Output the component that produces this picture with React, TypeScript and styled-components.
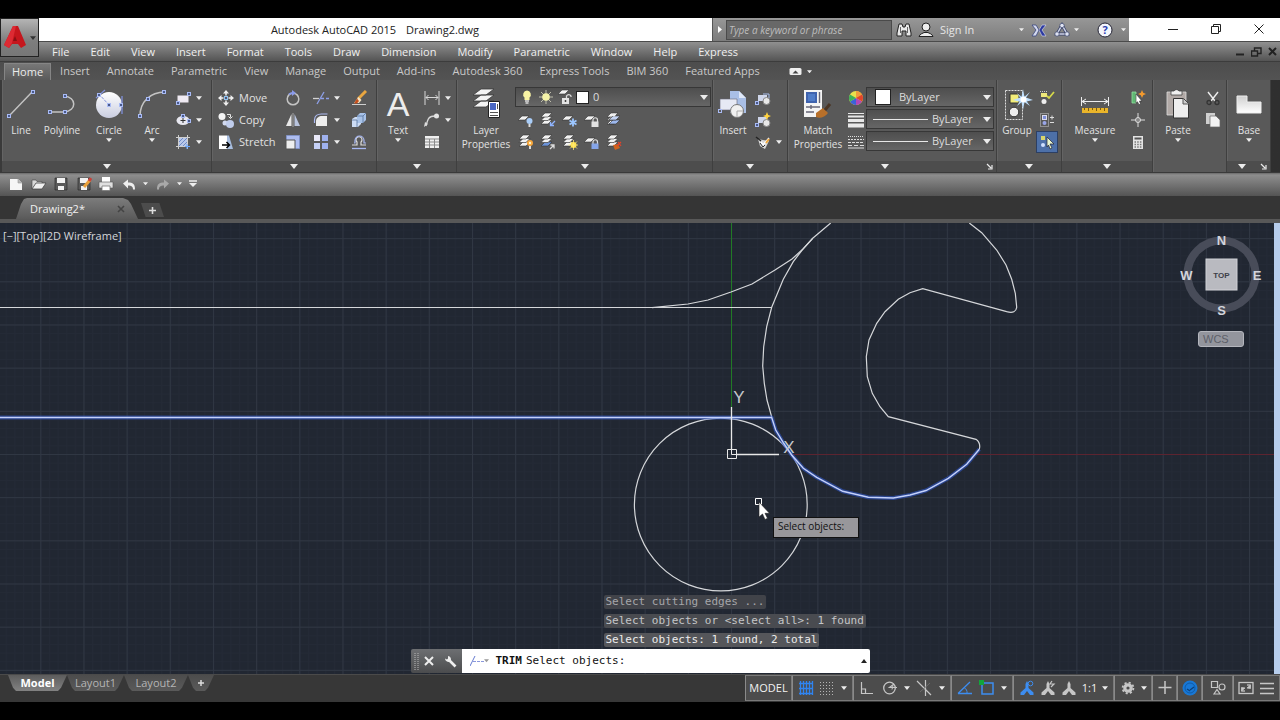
import React from "react";
import styled, { createGlobalStyle, css } from "styled-components";

const GlobalStyle = createGlobalStyle`
  *, *::before, *::after { box-sizing: border-box; }
  body { margin: 0; background: #000; }
  button, input, select { font: inherit; color: inherit; }
`;

const plain = css`
  border: 0;
  padding: 0;
  margin: 0;
  background: none;
  display: flex;
  align-items: center;
  justify-content: center;
  flex: none;
`;

const Page = styled.div`
  height: 100vh;
  min-height: 480px;
  padding: 18px 0;
  background: #000;
  display: flex;
  flex-direction: column;
  overflow: hidden;
  font-family: "Open Sans", "Noto Sans", sans-serif;
  font-size: 11px;
  line-height: 14px;
  color: #dcdcdc;
`;

/* ---------- title bar ---------- */

const Header = styled.header`
  position: relative;
  flex: none;
`;

const AppButton = styled.button`
  ${plain}
  position: absolute;
  left: 0;
  top: 0;
  z-index: 2;
  width: 39px;
  height: 39px;
  gap: 3px;
  border: 1px solid #222;
  background: linear-gradient(#b4b4b4, #7d7d7d 60%, #777);
`;

const TitleBar = styled.div`
  display: flex;
  height: 23px;
  padding-left: 38px;
  background: #fff;
  color: #222;
`;

const Title = styled.h1`
  flex: 1;
  margin: 0;
  display: flex;
  justify-content: center;
  align-items: center;
  gap: 10px;
  font-size: 11px;
  font-weight: 400;
`;

const InfoCenter = styled.div`
  display: flex;
  align-items: center;
  width: 417px;
  background: linear-gradient(#979797, #7c7c7c);
  border-left: 1px solid #555;
  color: #e6e6e6;
`;

const InfoButton = styled.button<{ $w: number }>`
  ${plain}
  width: ${(p) => p.$w}px;
  height: 22px;
`;

const HelpButton = styled(InfoButton)`
  margin-left: 10px;
`;

const SignIn = styled.button`
  ${plain}
  gap: 6px;
  width: 101px;
  justify-content: flex-start;
  padding-left: 2px;
`;

const SearchInput = styled.input`
  width: 166px;
  height: 20px;
  padding: 0 2px;
  border: 1px solid #4a4a4a;
  border-radius: 0;
  background: #686868;
  outline: 0;
  font-style: italic;
  font-size: 10px;
  &::placeholder {
    color: #bdbdbd;
    opacity: 1;
  }
`;

const WindowButtons = styled.div`
  display: flex;
  width: 151px;
  padding-left: 22px;
`;

const WindowButton = styled.button`
  ${plain}
  width: 43px;
  height: 22px;
`;

/* ---------- menus and tabs ---------- */

const MenuBar = styled.nav`
  display: flex;
  align-items: center;
  gap: 1px;
  height: 20px;
  padding-left: 42px;
  border-top: 1px solid #4b4b4b;
  background: linear-gradient(#909090, #545454);
`;

const MenuItem = styled.button`
  ${plain}
  padding: 0 10px;
  color: #f0f0f0;
`;

const MdiButtons = styled.div`
  display: flex;
  margin-left: auto;
`;

const MdiButton = styled.button`
  ${plain}
  width: 16px;
  height: 16px;
`;

const RibbonTabs = styled.div`
  display: flex;
  align-items: flex-end;
  height: 19px;
  padding-left: 4px;
  border-top: 1px solid #3c3c3c;
  background: linear-gradient(#4d4d4d, #535353);
`;

const RibbonTab = styled.button<{ $active?: boolean }>`
  ${plain}
  height: 17px;
  padding: 0 8px 1px;
  margin-right: 1px;
  color: ${(p) => (p.$active ? "#ececec" : "#c9c9c9")};
  ${(p) =>
    p.$active &&
    css`
      padding: 0 7px 1px;
      background: linear-gradient(#777, #5a5a5a);
      border: 1px solid #858585;
      border-bottom: 0;
    `}
`;

const RibbonToggle = styled.button`
  ${plain}
  gap: 5px;
  height: 17px;
  margin-left: 20px;
`;

/* ---------- ribbon ---------- */

const Ribbon = styled.div`
  display: flex;
  height: 93px;
  padding-left: 2px;
  background: linear-gradient(90deg, #3a3a3a, #2f2f2f);
  border-bottom: 1px solid #3a3a3a;
  font-size: 10px;
  flex: none;
`;

const Panel = styled.section<{ $w: number }>`
  display: flex;
  flex-direction: column;
  flex: none;
  width: ${(p) => p.$w}px;
  border-right: 1px solid #3f3f3f;
  background: #595959;
  box-shadow: inset 1px 0 #646464;
`;

const PanelBody = styled.div`
  display: flex;
  flex: 1;
  padding-top: 7px;
`;

const PanelFooter = styled.div`
  display: flex;
  align-items: center;
  height: 11px;
  background: #4d4d4d;
`;

const FooterButton = styled.button`
  ${plain}
  flex: 1;
  height: 11px;
`;

const Launcher = styled.button`
  ${plain}
  width: 14px;
  height: 11px;
`;

const BigButton = styled.button<{ $w: number }>`
  ${plain}
  flex-direction: column;
  justify-content: flex-start;
  align-self: flex-start;
  width: ${(p) => p.$w}px;
  line-height: 14px;
  color: #e2e2e2;
  svg { flex: none; }
`;

const BigLabel = styled.span`
  margin: 2px 0 1px;
  white-space: nowrap;
`;

const Column = styled.div<{ $w?: number; $pad?: number }>`
  display: flex;
  flex-direction: column;
  flex: none;
  width: ${(p) => (p.$w ? `${p.$w}px` : "auto")};
  padding-left: ${(p) => p.$pad || 0}px;
`;

const ToolRow = styled.div`
  display: flex;
  align-items: center;
  height: 22px;
`;

const Tool = styled.button<{ $w?: number; $on?: boolean }>`
  ${plain}
  width: ${(p) => p.$w || 26}px;
  height: 20px;
  ${(p) =>
    p.$on &&
    css`
      background: #4d70a8;
      box-shadow: 0 0 0 1px #2c3f63;
    `}
`;

const CaretTool = styled.button<{ $w?: number }>`
  ${plain}
  width: ${(p) => p.$w || 6}px;
  height: 20px;
`;

const TextTool = styled.button`
  ${plain}
  gap: 5px;
  height: 22px;
  justify-content: flex-start;
  color: #e2e2e2;
  font-size: 11px;
`;

const Combo = styled.label<{ $w: number }>`
  position: relative;
  display: flex;
  align-items: center;
  gap: 4px;
  width: ${(p) => p.$w}px;
  height: 20px;
  margin-bottom: 2px;
  padding-left: 4px;
  border: 1px solid #373737;
  background: linear-gradient(#4e4e4e, #666);
  font-size: 11px;
`;

const Select = styled.select<{ $indent: number }>`
  flex: 1;
  min-width: 0;
  height: 18px;
  padding: 0 12px 0 ${(p) => p.$indent}px;
  border: 0;
  background: none;
  appearance: none;
  outline: 0;
`;

const ComboArrow = styled.span`
  position: absolute;
  right: 2px;
  top: 0;
  height: 18px;
  display: flex;
  align-items: center;
  pointer-events: none;
`;

const Swatch = styled.span<{ $s: number }>`
  flex: none;
  width: ${(p) => p.$s}px;
  height: ${(p) => p.$s}px;
  background: #fff;
  border: 1px solid #222;
`;

const LineSample = styled.span`
  flex: none;
  width: 55px;
  height: 1px;
  margin-left: 2px;
  background: #e8e8e8;
`;

/* ---------- quick access and file tabs ---------- */

const QuickAccess = styled.div`
  display: flex;
  align-items: center;
  height: 23px;
  padding: 0 0 2px 4px;
  background: linear-gradient(#6a6a6a, #8e8e8e 2px, #545454);
`;

const FileTabs = styled.div`
  display: flex;
  align-items: flex-end;
  gap: 3px;
  height: 27px;
  padding-left: 16px;
  border-bottom: 4px solid #585858;
  background: #353535;
`;

const FileTab = styled.div`
  display: flex;
  align-items: center;
  justify-content: space-between;
  width: 122px;
  height: 21px;
  padding: 0 12px 0 14px;
  color: #f0f0f0;
  background: linear-gradient(#7c7c7c, #5a5a5a);
  clip-path: polygon(0 100%, 5px 6px, 8px 1px, 11px 0, 107px 0, 112px 2px, 115px 6px, 100% 100%);
`;

const NewTab = styled.button`
  ${plain}
  width: 23px;
  height: 14px;
  margin-bottom: 2px;
  background: #4c4c4c;
  clip-path: polygon(0 0, 80% 0, 100% 100%, 20% 100%);
`;

/* ---------- drawing area ---------- */

const Canvas = styled.main`
  position: relative;
  flex: 1;
  min-height: 0;
  overflow: hidden;
  border-right: 6px solid #b7cdec;
  background: #212732;
`;

const Drawing = styled.svg`
  position: absolute;
  left: 0;
  top: 0;
  width: 100%;
  height: 100%;
`;

const ViewLabel = styled.div`
  position: absolute;
  left: 3px;
  top: 6px;
  color: #d4d6da;
`;

const ViewCube = styled.div`
  position: absolute;
  right: 10px;
  top: 8px;
  display: flex;
  flex-direction: column;
  align-items: center;
  gap: 14px;
`;

const Wcs = styled.button`
  ${plain}
  width: 46px;
  height: 16px;
  margin-right: 2px;
  justify-content: flex-start;
  padding-left: 4px;
  border: 1px solid #b4b6bd;
  border-radius: 3px;
  background: #93959d;
  color: #5d6069;
  font-family: "Liberation Sans", sans-serif;
`;

const Tooltip = styled.div`
  position: absolute;
  left: 773px;
  top: 294px;
  height: 21px;
  width: 86px;
  padding: 1px 4px;
  border: 1px solid #111;
  background: #98979b;
  color: #111;
  font-size: 10px;
  white-space: nowrap;
`;

const CommandDock = styled.div`
  position: absolute;
  left: 3px;
  right: -3px;
  bottom: 0;
  display: flex;
  justify-content: center;
  font-family: "DejaVu Sans Mono", "Liberation Mono", monospace;
`;

const CommandPanel = styled.div`
  display: flex;
  flex-direction: column;
  width: 459px;
`;

const History = styled.div`
  display: flex;
  flex-direction: column;
  align-items: flex-start;
  gap: 5px;
  padding: 0 0 2px 193px;
`;

const HistoryLine = styled.div<{ $tone: string; $bg: string }>`
  padding: 0 2px;
  height: 14px;
  white-space: nowrap;
  color: ${(p) => p.$tone};
  background: ${(p) => p.$bg};
  border-radius: 2px;
`;

const CommandBar = styled.div`
  display: flex;
  height: 24px;
  margin-bottom: 1px;
`;

const CommandGrip = styled.div`
  display: flex;
  align-items: center;
  width: 51px;
  padding-left: 3px;
  background: linear-gradient(#6d6f72, #4b4c4e);
  border-radius: 2px 0 0 2px;
`;

const GripButton = styled.button`
  ${plain}
  width: 21px;
  height: 22px;
`;

const CommandEntry = styled.label`
  display: flex;
  align-items: center;
  flex: 1;
  padding: 0 3px 0 8px;
  background: #fff;
  color: #111;
  white-space: nowrap;
  border-radius: 0 2px 2px 0;
`;

const CommandName = styled.b`
  margin: 0 4px 0 7px;
`;

const CommandInput = styled.input`
  flex: 1;
  min-width: 0;
  padding: 0 4px;
  border: 0;
  outline: 0;
  background: none;
`;

/* ---------- status bar ---------- */

const StatusBar = styled.footer`
  display: flex;
  flex: none;
  height: 28px;
  border-top: 1px solid #4a4a4a;
  background: #373737;
`;

const LayoutTabs = styled.div`
  display: flex;
  padding-left: 8px;
`;

const LayoutTab = styled.button<{ $w: number; $active?: boolean }>`
  ${plain}
  width: ${(p) => p.$w}px;
  height: 16px;
  color: ${(p) => (p.$active ? "#fff" : "#b4b4b4")};
  font-weight: ${(p) => (p.$active ? 700 : 400)};
  background: ${(p) => (p.$active ? "linear-gradient(#5c5c5c, #828282)" : "linear-gradient(#4c4c4c, #5a5a5a)")};
  clip-path: polygon(0 0, 100% 0, calc(100% - 6px) 80%, calc(100% - 9px) 100%, 8px 100%, 5px 80%);
`;

const StatusCells = styled.div`
  display: flex;
  margin-left: auto;
  height: 27px;
`;

const Cell = styled.div<{ $w: number }>`
  display: flex;
  align-items: center;
  justify-content: space-around;
  width: ${(p) => p.$w}px;
  height: 26px;
  padding: 0 2px;
  border: 1px solid #797979;
  border-left-color: #8a8a8a;
  background: #4c4c4c;
  color: #f2f2f2;
`;

const CellButton = styled.button`
  ${plain}
  height: 24px;
`;

/* ---------- icon pieces ---------- */

type P = { children?: React.ReactNode; w?: number; h?: number; vb?: string };
const I = ({ children, w = 16, h = 16, vb }: P) => (
  <svg width={w} height={h} viewBox={vb || `0 0 ${w} ${h}`} fill="none" aria-hidden="true">
    {children}
  </svg>
);

const Caret = ({ s = 6, c = "#ececec" }: { s?: number; c?: string }) => (
  <svg width={s} height={s / 2 + 1} viewBox="0 0 8 5" aria-hidden="true">
    <path d="M0 0h8L4 5z" fill={c} />
  </svg>
);

const Node = ({ x, y }: { x: number; y: number }) => (
  <rect x={x - 1.5} y={y - 1.5} width="3" height="3" fill="#4a5a8a" stroke="#a9bbf5" strokeWidth="1" />
);

const Sheet = ({ x, y, c = "#f2f2f2" }: { x: number; y: number; c?: string }) => (
  <path d={`M${x + 4} ${y}h7l-4 4h-7z`} fill={c} stroke="#333" strokeWidth=".6" />
);

const Stack = ({ c = "#f2f2f2" }: { c?: string }) => (
  <>
    <Sheet x={1} y={8} c={c} />
    <Sheet x={1} y={4.5} />
    <Sheet x={1} y={1} />
  </>
);

const LineIcon = () => (
  <I w={34} h={34}>
    <path d="M5 29L29 4" stroke="#c4c4c4" strokeWidth="1.4" />
    <Node x={5} y={29} />
    <Node x={29} y={5} />
  </I>
);
const PolylineIcon = () => (
  <I w={34} h={34}>
    <path d="M4 25h15c13-1 13-15 0-16" stroke="#c4c4c4" strokeWidth="1.5" />
    <Node x={5} y={25} />
    <Node x={20} y={25} />
    <Node x={20} y={9} />
  </I>
);
const CircleIcon = () => (
  <I w={34} h={34}>
    <defs>
      <linearGradient id="disc" x1="0" y1="0" x2="0" y2="1">
        <stop offset="0" stopColor="#fff" />
        <stop offset="1" stopColor="#c9cde0" />
      </linearGradient>
    </defs>
    <circle cx="17" cy="18" r="13" fill="url(#disc)" />
    <path d="M17 18L6 6" stroke="#8795d8" strokeDasharray="3 1" />
    <path d="M4 11l9-8M30 9v18" stroke="#7f8fd9" strokeWidth="1.3" />
    <Node x={17} y={18} />
    <Node x={7} y={8} />
    <Node x={29} y={18} />
  </I>
);
const ArcIcon = () => (
  <I w={34} h={34}>
    <path d="M5 29C5 15 15 5 30 5" stroke="#c4c4c4" strokeWidth="1.6" />
    <Node x={5} y={29} />
    <Node x={13} y={12} />
    <Node x={29} y={5} />
  </I>
);
const RectIcon = () => (
  <I>
    <rect x="2.5" y="5.5" width="11" height="7" fill="#efeaf2" />
    <Node x={3} y={13} />
    <Node x={14} y={4} />
  </I>
);
const EllipseIcon = () => (
  <I>
    <ellipse cx="8" cy="8.5" rx="6.500" ry="4.500" fill="#e8e8f0" />
    <path d="M8 6v5M5.500 8.500h5" stroke="#333" />
    <Node x={8} y={4} />
    <Node x={14} y={9} />
  </I>
);
const HatchIcon = () => (
  <I>
    <rect x="3.500" y="3.500" width="9" height="9" fill="#b9c9ea" />
    <path d="M3.500 1v14M12.500 1v14M1 3.500h14M1 12.500h14" stroke="#cfcfcf" />
    <path d="M4 8l4-4M4 12l8-8M8 12l4-4" stroke="#6f8ac8" />
    <path d="M12 10v5M10 12.500h5" stroke="#69a6ff" />
  </I>
);
const MoveIcon = () => (
  <I>
    <path d="M8 0l3 3.500H5zM8 16l3-3.500H5zM0 8l3.500-3v6zM16 8l-3.500-3v6z" fill="#f0f0f0" />
    <path d="M8 3v2.500M8 10.500V13M3 8h2.500M10.500 8H13" stroke="#f0f0f0" strokeWidth="1.500" />
    <rect x="6.500" y="6.500" width="3" height="3" fill="#557" stroke="#8fc4f0" />
  </I>
);
const CopyIcon = () => (
  <I>
    <circle cx="4" cy="4.500" r="3.500" fill="#f4f4f4" />
    <circle cx="7" cy="11" r="2.500" fill="#d2daf0" />
    <circle cx="12" cy="12" r="4" fill="#c0cdec" />
    <path d="M9 2.500h3.500v3M10.500 4.500l2 2 2-2" stroke="#e8e8e8" />
  </I>
);
const StretchIcon = () => (
  <I>
    <path d="M1 1.500h8V15H1z" fill="#fff" />
    <path d="M9 1.500h2L15 15H9z" fill="#a8bee0" />
    <path d="M4 11h7M8.500 8l3 3-3 3" stroke="#000" strokeWidth="1.500" />
  </I>
);
const RotateIcon = () => (
  <I>
    <circle cx="8" cy="9" r="5.800" stroke="#c4c4c4" strokeWidth="1.500" />
    <path d="M4 4.500A6 6 0 0 1 9 3" stroke="#8b9bea" strokeWidth="2" />
    <path d="M7 0l4 3-4 3z" fill="#8b9bea" />
  </I>
);
const TrimIcon = () => (
  <I>
    <path d="M0 8.500h6" stroke="#d2d2d2" strokeWidth="1.300" />
    <path d="M8 8.500h8" stroke="#8ea0e8" strokeWidth="1.300" strokeDasharray="3 2" />
    <path d="M4 14L11 2" stroke="#8ea0e8" strokeWidth="1.300" />
  </I>
);
const EraseIcon = () => (
  <I>
    <path d="M15 1l-8 8" stroke="#e9a640" strokeWidth="3" />
    <path d="M7.500 7l3 3-2.500 3H3z" fill="#f3e3c3" />
    <path d="M6 8.500l2 2.500-2 2.500H3z" fill="#c34e1c" />
    <path d="M1 14.500h14" stroke="#cfcfcf" />
  </I>
);
const MirrorIcon = () => (
  <I>
    <path d="M6.500 2v12H1z" fill="#e8e8e8" />
    <path d="M9.500 2v12H15z" fill="#b9c4dd" />
    <path d="M8 1v14" stroke="#bbb" strokeWidth=".8" />
  </I>
);
const FilletIcon = () => (
  <I>
    <path d="M3 14V9c0-3 3-5 6-5h5v10z" fill="#ededed" />
    <path d="M1.500 11V8c0-4 3-6 7-6h6" stroke="#aebcf4" strokeWidth="1.200" />
  </I>
);
const BoxIcon = () => (
  <I>
    <path d="M1 7l3-2h6v7l-3 3H1z" fill="#cddcf4" />
    <path d="M6 4l3-3h6v7l-3 3H6z" fill="#a9c3e8" />
    <path d="M6 4h6v7M12 4l3-3M1 8h5v7" stroke="#55719c" strokeWidth=".8" />
  </I>
);
const ScaleIcon = () => (
  <I>
    <path d="M1.500 1.500h13v13h-13z" fill="#aebdf0" stroke="#8293c6" />
    <path d="M1 6h9v9H1z" fill="#eee" stroke="#555" />
  </I>
);
const ArrayIcon = () => (
  <I>
    <path d="M1 1h6v6H1z" fill="#e8e8f8" />
    <path d="M9 1h6v6H9zM9 9h6v6H9z" fill="#9fb1ee" />
    <path d="M1 9h6v6H1z" fill="#c5d0f6" />
  </I>
);
const OffsetIcon = () => (
  <I>
    <path d="M1 11h5V8a3 3 0 1 1 4 0v3h5" stroke="#dcdcdc" strokeWidth="1.200" />
    <path d="M3 9h1V6.500a4.500 4.500 0 0 1 9 0V9h2" stroke="#a8b8f4" strokeWidth="1.200" />
    <path d="M1 14.500h14" stroke="#a8b8f4" strokeWidth="1.300" />
  </I>
);
const LetterWrap = styled.span`
  display: flex;
  align-items: center;
  height: 34px;
  font-family: "Liberation Sans", sans-serif;
  font-size: 34px;
  line-height: 34px;
  color: #ececec;
`;
const DimIcon = () => (
  <I>
    <path d="M1 1v14M15 1v14" stroke="#d8d8d8" />
    <path d="M2 7.500h12M4.500 5L2 7.500 4.500 10M11.500 5L14 7.500l-2.500 2.500" stroke="#d8d8d8" />
  </I>
);
const LeaderIcon = () => (
  <I>
    <path d="M2 14C4 6 5 4 11 4" stroke="#d8d8d8" strokeWidth="1.300" />
    <path d="M0 15l1-5 3 2z" fill="#ddd" />
    <circle cx="12.500" cy="4" r="2.500" fill="#e4e4e4" />
  </I>
);
const TableIcon = () => (
  <I>
    <path d="M1 2h14v12H1z" fill="#f0f0f0" />
    <path d="M1 5h14M1 8h14M1 11h14M5.500 5v9M10.500 5v9" stroke="#8b8b8b" />
  </I>
);
const LayerPropsIcon = () => (
  <I w={34} h={34}>
    <path d="M12 14h13l-8 6H4zM12 8h13l-8 6H4zM12 2h13l-8 6H4z" fill="#f4f4f4" stroke="#3a3a3a" strokeWidth=".8" />
    <path d="M19.500 14.500h11v16h-11z" fill="#fff" stroke="#222" />
    <path d="M21 16h6v7h-6z" fill="#4a67c4" />
    <path d="M28.500 17v5M21 25.500h8M21 28.500h8" stroke="#555" />
  </I>
);
const BulbIcon = () => (
  <I w={14}>
    <path d="M7 1.500a4 4 0 0 1 2.500 7V11h-5V8.500A4 4 0 0 1 7 1.500z" fill="#f8f3a4" />
    <path d="M5 12h4M5.500 14h3" stroke="#ddd" strokeWidth="1.300" />
  </I>
);
const SunIcon = () => (
  <I>
    <path d="M8 1v14M1 8h14M3 3l10 10M13 3L3 13" stroke="#c9c9b5" strokeWidth=".9" />
    <circle cx="8" cy="8" r="3.800" fill="#f4f2a8" />
  </I>
);
const UnlockIcon = () => (
  <I w={14}>
    <Sheet x={0} y={1} />
    <path d="M8.500 9V7a2.500 2.500 0 0 1 4.500 0v1" stroke="#ddd" strokeWidth="1.300" />
    <rect x="4" y="9" width="7" height="6" fill="#e4e4e4" />
    <path d="M7.500 11v2" stroke="#444" strokeWidth="1.500" />
  </I>
);
const LayerTool = ({ kind }: { kind: number }) => (
  <I>
    {[0, 2, 3, 8].includes(kind) ? <Sheet x={0} y={4} /> : <Stack c={kind === 6 ? "#6b93d8" : "#f2f2f2"} />}
    {kind === 0 && (
      <>
        <circle cx="11.500" cy="9" r="3" fill="#a9cdf8" />
        <path d="M11.500 12v3" stroke="#ddd" strokeWidth="2" />
      </>
    )}
    {kind === 1 && <path d="M15 9l-4 4M10.500 10v3.500H14" stroke="#8fb4ff" strokeWidth="1.300" />}
    {kind === 2 && <path d="M11 6.500v8M7.500 8.500l7 4M14.500 8.500l-7 4" stroke="#9cc6ff" strokeWidth="1.800" />}
    {(kind === 3 || kind === 8) && (
      <>
        <path d="M9 10V8a2 2 0 0 1 4.500 0v2" stroke="#ddd" strokeWidth="1.200" />
        <rect x="7.500" y="9.500" width="7" height="5.500" fill={kind === 3 ? "#e2e2e2" : "#86a5e8"} />
      </>
    )}
    {kind === 4 && (
      <>
        <Sheet x={3} y={8} c="#9db8ee" />
        <Sheet x={3} y={4} c="#c3d3f4" />
        <circle cx="8" cy="3" r="1.500" fill="#eee" />
      </>
    )}
    {kind === 5 && (
      <>
        <circle cx="12" cy="9" r="3" fill="#f7a53a" />
        <circle cx="12" cy="9" r="1.200" fill="#fff3c2" />
        <path d="M12 12v3" stroke="#ddd" strokeWidth="2" />
      </>
    )}
    {kind === 6 && <path d="M10 15l4-4M10.500 11H14v3.500" stroke="#ddd" strokeWidth="1.300" />}
    {kind === 7 && (
      <>
        <circle cx="11.500" cy="11" r="3" fill="#ffe03a" />
        <path d="M11.500 6v10M6.500 11h10M8 7.500l7 7M15 7.500l-7 7" stroke="#ffe878" strokeWidth=".8" />
      </>
    )}
    {kind === 9 && (
      <>
        <path d="M7 11l5-1 2 4-5 2z" fill="#d0631d" />
        <path d="M11 12l4-4M12 8l3 4" stroke="#e3432a" strokeWidth="1.200" />
      </>
    )}
  </I>
);
const InsertIcon = () => (
  <I w={34} h={34}>
    <path d="M14 4h9l7 7v15H14z" fill="#a9bfe6" />
    <path d="M23 4v7h7z" fill="#dfe8f8" />
    <path d="M4 12h17v11H4z" fill="#e6e9f4" stroke="#667" strokeWidth=".6" />
    <circle cx="21" cy="24" r="6.500" fill="#f0f0f0" stroke="#777" />
    <path d="M21 24h6M21 24v6" stroke="#aaa" />
    <rect x="2.500" y="22.500" width="3" height="3" stroke="#a9bbf5" />
  </I>
);
const BlockIcon = ({ kind }: { kind: number }) =>
  kind === 2 ? (
    <I>
      <path d="M3 5l5 1 6 1-4 8-5-3z" fill="#d9d9d9" />
      <path d="M1 3l5 4" stroke="#222" strokeWidth="1.500" />
      <path d="M6 8l2 3 6-7" stroke="#fff" strokeWidth="1.500" />
      <path d="M11 9l3-4" stroke="#f0a83c" strokeWidth="2" />
      <path d="M5 9l3 4 2-2" stroke="#333" />
    </I>
  ) : (
    <I>
      <path d="M3 5h9v6H3z" fill="#cfd6ea" />
      <circle cx="11.500" cy="11" r="3.500" fill="#e8e8e8" stroke="#888" />
      <Node x={2} y={13} />
      {kind === 1 ? (
        <path d="M12 0l1.200 3L16 4l-2.800 1.200L12 8l-1.200-2.800L8 4l2.800-1z" fill="#ffd23e" />
      ) : (
        <path d="M8 4h6v4" stroke="#a9bfee" />
      )}
    </I>
  );
const MatchIcon = () => (
  <I w={34} h={34}>
    <path d="M3 3h18v27H3z" fill="#f4f4f4" />
    <path d="M5 5h11v11H5z" fill="#3f63ae" />
    <path d="M7 7h7v7H7z" fill="#4f7cc8" />
    <path d="M18.500 5v11M5 20h14M5 25h8M10 18v4" stroke="#667" strokeWidth="1.400" />
    <path d="M15 26l7-5 5 5c-3 4-8 6-12 4z" fill="#b8702a" />
    <path d="M24 23l5-6" stroke="#4a3524" strokeWidth="3" />
  </I>
);
const WheelIcon = () => (
  <I>
    <circle cx="8" cy="8" r="7" fill="#e8e04c" />
    <path d="M8 8V1a7 7 0 0 1 6 3.500z" fill="#f09a3c" />
    <path d="M8 8l6-3.500a7 7 0 0 1 0 7z" fill="#e2442c" />
    <path d="M8 8l6 3.500A7 7 0 0 1 8 15z" fill="#b048b8" />
    <path d="M8 8v7a7 7 0 0 1-6-3.500z" fill="#3c62d8" />
    <path d="M8 8l-6 3.500a7 7 0 0 1 0-7z" fill="#3cb05c" />
  </I>
);
const WeightIcon = () => (
  <I>
    <path d="M0 1.500h16" stroke="#e8e8e8" />
    <path d="M0 4.500h16" stroke="#e8e8e8" strokeWidth="2" />
    <path d="M0 8.500h16" stroke="#e8e8e8" strokeWidth="3" />
    <path d="M0 13.500h16" stroke="#e8e8e8" strokeWidth="4" />
  </I>
);
const LinetypeIcon = () => (
  <I>
    <path d="M0 2.500h16" stroke="#ddd" strokeDasharray="1 1" />
    <path d="M0 5.500h16" stroke="#ddd" strokeDasharray="2 1" />
    <path d="M0 8.500h16" stroke="#ddd" strokeDasharray="3 1" />
    <path d="M0 11.500h16" stroke="#ddd" strokeDasharray="4 2" />
    <path d="M0 14h16" stroke="#ddd" />
  </I>
);
const GroupIcon = () => (
  <I w={34} h={34}>
    <path d="M5.500 3.500h17v29h-17z" stroke="#ddd" strokeDasharray="2 1" />
    <path d="M10 7h9v9h-9z" fill="#f3ee7a" stroke="#333" />
    <circle cx="14" cy="25" r="4.800" fill="#eee" stroke="#333" />
    <path d="M23 2l1.500 8L33 13l-8.500 2L23 23l-1.500-8-8.500-2 8.500-3zM17 6l6 5 7-6-5 7 5 7-7-5-6 5 4-7z" fill="#bfe0ff" />
    <circle cx="23.500" cy="12.500" r="3" fill="#fff" />
  </I>
);
const GroupTool = ({ kind }: { kind: number }) => (
  <I>
    {kind === 0 && (
      <>
        <rect x="2" y="3" width="6" height="4" fill="#eee77a" />
        <path d="M1 1.500h8" stroke="#ccc" strokeDasharray="1 1" />
        <circle cx="5" cy="11.500" r="2.500" fill="#eee" />
        <path d="M8 6l2 2 5-6" stroke="#d5d84a" strokeWidth="1.800" />
      </>
    )}
    {kind === 1 && (
      <>
        <path d="M1.500 1.500h8v13h-8z" stroke="#ccc" strokeDasharray="1 1" />
        <rect x="3.500" y="3.500" width="4" height="4" fill="#7f8fd9" stroke="#dde" />
        <circle cx="5.500" cy="11" r="2" fill="#99a6e8" />
        <path d="M11 5.500h4M13 3.500v4M11 10.500h4" stroke="#ddd" />
      </>
    )}
    {kind === 2 && (
      <>
        <rect x="2" y="2" width="4" height="4" fill="#d8d56c" />
        <rect x="2" y="9" width="4" height="4" rx="2" fill="#cfe0ff" />
        <path d="M8 3l7 7h-4l2 4-2 1-1.500-4L8 13z" fill="#e9f6cf" stroke="#223" strokeWidth=".7" />
      </>
    )}
  </I>
);
const MeasureIcon = () => (
  <I w={34} h={34}>
    <path d="M3.500 10v9M30.500 10v9" stroke="#eee" />
    <path d="M4 14.500h26M8 12l-4 2.500L8 17M26 12l4 2.500-4 2.500" stroke="#eee" />
    <path d="M4 21h26v5H4z" fill="#eab52a" />
    <path d="M6.500 21v2M10.500 21v3M14.500 21v2M18.500 21v3M22.500 21v2M26.500 21v3" stroke="#7a5a10" />
  </I>
);
const QuickSelectIcon = () => (
  <I>
    <path d="M2 2h4v11H2z" fill="#5fb873" stroke="#8fe0a0" strokeWidth=".8" />
    <path d="M6 4l6 7H9.500l1 3-1.500.8-1.500-3L6 13z" fill="#fff" stroke="#333" strokeWidth=".6" />
    <path d="M12 0l1.200 2.800L16 4l-2.800 1.200L12 8l-1.200-2.800L8 4l2.800-1.200z" fill="#f39a2e" />
  </I>
);
const PointIcon = () => (
  <I>
    <path d="M8 1v14M1 8h14" stroke="#ddd" />
    <circle cx="8" cy="8" r="2.500" fill="#888" stroke="#ddd" />
  </I>
);
const CalcIcon = () => (
  <I>
    <rect x="3" y="2" width="10" height="13" fill="#e4e4e4" />
    <path d="M4.500 4.500h7" stroke="#555" strokeWidth="2" />
    <path d="M4.500 8h7M4.500 10.500h7M4.500 13h7" stroke="#777" strokeDasharray="1.500 1.200" strokeWidth="1.300" />
  </I>
);
const PasteIcon = () => (
  <I w={34} h={34}>
    <path d="M6 5h19v23H6z" fill="#b1a9a6" stroke="#ddd" strokeWidth=".8" />
    <path d="M10 8V4h3a3 3 0 0 1 5 0h3v4z" fill="#f0f0f0" stroke="#444" strokeWidth=".8" />
    <path d="M12.500 11.500h10l5 5v14.500h-15z" fill="#eee" stroke="#333" />
    <path d="M22 11.500v5.500h5.500" fill="#ccc" stroke="#555" />
  </I>
);
const CutIcon = () => (
  <I>
    <path d="M3 2l7 9M13 2L6 11" stroke="#eee" strokeWidth="1.400" />
    <circle cx="4" cy="12.500" r="2" stroke="#333" strokeWidth="1.300" />
    <circle cx="12" cy="12.500" r="2" stroke="#333" strokeWidth="1.300" />
  </I>
);
const CopyClipIcon = () => (
  <I>
    <path d="M1 1h9v11H1z" fill="#cfcfcf" />
    <path d="M5 4h6l4 4v7H5z" fill="#f2f2f2" stroke="#666" strokeWidth=".7" />
  </I>
);
const BaseIcon = () => (
  <I w={34} h={34}>
    <defs>
      <linearGradient id="base" x1="0" y1="0" x2="0" y2="1">
        <stop offset="0" stopColor="#cfcfcf" />
        <stop offset="1" stopColor="#fff" />
      </linearGradient>
    </defs>
    <path d="M5 9h10v6h14v11H5z" fill="url(#base)" stroke="#eee" />
  </I>
);
const LauncherIcon = () => (
  <I w={7} h={7}>
    <path d="M1 1l4 4M6 2v4H2" stroke="#ececec" strokeWidth="1.200" />
  </I>
);

/* quick access */
const NewIcon = () => (
  <I>
    <path d="M2 3h8l4 4v7H2z" fill="#f6f6f6" />
    <path d="M10 3v4h4" fill="#bbb" stroke="#999" strokeWidth=".6" />
  </I>
);
const OpenIcon = () => (
  <I>
    <path d="M1 13V4h4l1 1.500h5V8" fill="#d8d8d8" stroke="#444" strokeWidth=".6" />
    <path d="M1 13l4-6h10l-4 6z" fill="#f0f0f0" stroke="#444" strokeWidth=".8" />
  </I>
);
const SaveIcon = ({ pen }: { pen?: boolean }) => (
  <I>
    <path d="M2 2h12v12H2z" fill="#5a5a5a" stroke="#222" strokeWidth=".6" />
    <path d="M4 2h8v5H4zM5 10h6v4H5z" fill="#f2f2f2" />
    {pen && <path d="M14 4l-6 7" stroke="#eba13a" strokeWidth="3" />}
    {pen && <path d="M15 2l-2 3" stroke="#c8413a" strokeWidth="3" />}
  </I>
);
const PrintIcon = () => (
  <I>
    <path d="M4 1h8v5H4z" fill="#fff" />
    <path d="M1 6h14v6H1z" fill="#e0e0e0" stroke="#555" strokeWidth=".6" />
    <path d="M4 10h8v4.500H4z" fill="#fff" stroke="#777" strokeWidth=".8" />
  </I>
);
const UndoIcon = ({ flip }: { flip?: boolean }) => (
  <I>
    <path
      transform={flip ? "translate(16 0) scale(-1 1)" : undefined}
      d="M2 7.500L7 3.500v3c5 0 7 1.500 7 7H12c0-3-1.500-4-5-4v3z"
      fill={flip ? "#a9a9a9" : "#eee"}
    />
  </I>
);

/* status bar */
const blue = "#3d8df0";
const light = "#c6c6c6";
const GridIcon = ({ on }: { on?: boolean }) => (
  <I>
    {on ? (
      <path d="M2.500 1v14M5.500 1v14M8.500 1v14M11.500 1v14M14.500 1v14M1 3.500h14M1 8.500h14M1 13.500h14" stroke="#2f84f0" strokeWidth="1.300" />
    ) : (
      <path d="M1 2.500h14M1 5.500h14M1 8.500h14M1 11.500h14M1 14.500h14" stroke="#b5b5b5" strokeDasharray="1 2" />
    )}
  </I>
);
const OrthoIcon = () => (
  <I>
    <path d="M2.500 2v11.500H14M2.500 9h4v4.500" stroke={light} strokeWidth="1.200" />
  </I>
);
const PolarIcon = () => (
  <I>
    <circle cx="7.500" cy="8" r="5.800" stroke={light} strokeWidth="1.300" />
    <path d="M15 7.500H7.500L12 4" stroke={light} strokeWidth="1.200" />
    <path d="M10 9.500l1-4" stroke={light} />
  </I>
);
const IsoIcon = () => (
  <I>
    <path d="M1 1l14 14M9.500 0v16" stroke={light} strokeWidth="1.200" />
    <path d="M14 3L4 12" stroke="#6c6c6c" />
  </I>
);
const TrackIcon = () => (
  <I>
    <path d="M1 13.500h14M1 13.500L13 2" stroke={blue} strokeWidth="1.300" />
    <path d="M7 7.500a6 6 0 0 1 3 6" stroke={blue} />
  </I>
);
const SnapIcon = () => (
  <I>
    <path d="M3 3h11v11H3z" stroke={blue} strokeWidth="1.500" />
    <rect x="0" y="0" width="5" height="5" fill="#12a53a" />
  </I>
);
const ScaleMan = ({ c, kind }: { c: string; kind: number }) => (
  <I>
    <path d="M6.500 4L8 1l1.500 3v4l5 4.500V15H11l-3-4-3 4H1.500v-2.500L6.500 8z" fill={c} />
    {kind === 0 && <circle cx="11.500" cy="3.500" r="2.300" fill="#4c4c4c" stroke={c} />}
    {kind === 1 && <path d="M12 1l-2 3h4l-3 3" stroke={c} strokeWidth="1.200" />}
  </I>
);
const GearIcon = () => (
  <I>
    <circle cx="8" cy="8" r="3.200" stroke={light} strokeWidth="3.200" />
    <circle cx="8" cy="8" r="5.400" stroke={light} strokeWidth="1.800" strokeDasharray="2.120 2.120" />
  </I>
);
const PlusIcon = () => (
  <I>
    <path d="M8 1v13M1.500 7.500h13" stroke={light} strokeWidth="1.500" />
  </I>
);
const PerfIcon = () => (
  <I>
    <circle cx="8" cy="8" r="7.500" fill="#1878d6" />
    <circle cx="8" cy="8" r="5" stroke="#0f5aa8" />
    <path d="M8 10l4-3M5 9l3 2" stroke="#0b3f7a" strokeWidth="1.200" />
  </I>
);
const IsolateIcon = () => (
  <I>
    <path d="M1.500 1.500h6v6h-6z" stroke={light} strokeWidth="1.200" />
    <circle cx="12" cy="7" r="3" stroke={light} strokeWidth="1.200" />
    <path d="M7 9.500l3 4.500H4z" stroke={light} strokeWidth="1.200" />
  </I>
);
const CleanIcon = () => (
  <I>
    <rect x="1" y="2.500" width="14" height="11" stroke={light} strokeWidth="1.300" />
    <path d="M9 8l3.500-3v3.500zM12.500 5H9zM7 8l-3.500 3V7.500zM3.500 11H7z" fill={light} stroke={light} strokeWidth=".8" />
  </I>
);
const BurgerIcon = () => (
  <I>
    <path d="M1 3.500h14M1 8.500h14M1 13.500h14" stroke={light} strokeWidth="1.600" />
  </I>
);

/* ---------- composite controls ---------- */

const Big = ({ w, icon, label, caret }: { w: number; icon: React.ReactNode; label: string[]; caret?: boolean }) => (
  <BigButton $w={w}>
    {icon}
    <BigLabel>
      {label.map((line, i) => (
        <React.Fragment key={line}>
          {i > 0 && <br />}
          {line}
        </React.Fragment>
      ))}
    </BigLabel>
    {caret && <Caret s={6} />}
  </BigButton>
);

const SplitRow = ({ icon, name, w, cw }: { icon: React.ReactNode; name: string; w?: number; cw?: number }) => (
  <ToolRow>
    <Tool aria-label={name} $w={w}>{icon}</Tool>
    <CaretTool aria-label={`${name} options`} $w={cw}>
      <Caret s={6} />
    </CaretTool>
  </ToolRow>
);

const Row = ({ icon, name, w, on }: { icon: React.ReactNode; name: string; w?: number; on?: boolean }) => (
  <ToolRow>
    <Tool aria-label={name} $w={w} $on={on}>{icon}</Tool>
  </ToolRow>
);

const Footer = ({ name, launcher }: { name: string; launcher?: boolean }) => (
  <PanelFooter>
    <FooterButton aria-label={`${name} panel`}>
      <Caret s={8} />
    </FooterButton>
    {launcher && (
      <Launcher aria-label={`${name} settings`}>
        <LauncherIcon />
      </Launcher>
    )}
  </PanelFooter>
);

const ComboBox = ({ w, name, value, indent, children }: { w: number; name: string; value: string; indent: number; children: React.ReactNode }) => (
  <Combo $w={w}>
    {children}
    <Select aria-label={name} $indent={indent}>
      <option>{value}</option>
    </Select>
    <ComboArrow>
      <Caret s={8} />
    </ComboArrow>
  </Combo>
);

const menus = ["File", "Edit", "View", "Insert", "Format", "Tools", "Draw", "Dimension", "Modify", "Parametric", "Window", "Help", "Express"];
const tabs = ["Home", "Insert", "Annotate", "Parametric", "View", "Manage", "Output", "Add-ins", "Autodesk 360", "Express Tools", "BIM 360", "Featured Apps"];
const layerTools = ["Off", "Isolate", "Freeze", "Lock", "Make Current", "On", "Unisolate", "Thaw", "Unlock", "Match"];

const jaw =
  "M830.7 223L812.7 238.3 802.7 249.3 793.3 261.7 783.3 279.3 771.7 307.3 766.7 326.7 763.7 346.7 762.7 366 764.3 383.3 767 400 771.7 417" +
  "M979.3 449.3Q981 443 976 439.3L888.3 416.7 880 406.7 872.3 393.3 867.3 376.7 866.3 356.7 869 340 876.7 323.3 885 311.7 898.3 299.3 910 292.7 922.7 288.7 1006.7 311.7Q1016 314 1016.7 307.3L1015.3 293.3 1011.7 279.3 1006 265 996.7 250 981.7 232.7 969.3 223";
const picked =
  "M0 417.5H771.7L775.7 430 783.3 442.7 791.7 455 803.3 468.3 816.7 477.3 842.7 491.3 868.3 497.3 893.3 498 910 495 926 490.5 948.3 478.3 966.7 464.3 979.3 449.3";

const ModelSpace = () => (
  <Drawing aria-label="Wrench drawing">
    <defs>
      <pattern id="minor" patternUnits="userSpaceOnUse" x="731" y="454" width="8.634" height="8.634">
        <path d="M.5 0v9M0 .5h9" stroke="#242a36" fill="none" />
      </pattern>
      <pattern id="major" patternUnits="userSpaceOnUse" x="731" y="454" width="43.17" height="43.17">
        <path d="M.5 0v44M0 .5h44" stroke="#303743" fill="none" />
      </pattern>
    </defs>
    <g transform="translate(0 -223)" fill="none">
      <rect y="223" width="100%" height="100%" fill="url(#minor)" />
      <rect y="223" width="100%" height="100%" fill="url(#major)" />
      <path d="M731.500 223V407" stroke="#217a25" />
      <path d="M790 454.500H1274" stroke="#5c2430" />
      <g stroke="#d5d7da" strokeWidth="1.200">
        <path d="M0 307.500H771.700" />
        <path d="M652 307.700L688 304 708 300 731 292 752 284 775 270 792 259 803 249 812.700 238.300" />
        <path d={jaw} />
        <circle cx="720.800" cy="504.500" r="86.400" />
      </g>
      <path d={picked} stroke="#2f57c8" strokeWidth="4" opacity=".6" strokeLinejoin="round" />
      <path d={picked} stroke="#c3d0fa" strokeWidth="1.400" />
      <g stroke="#e8e8e8">
        <path d="M731.500 407V450M736 454.500H779" strokeWidth="1.300" />
        <path d="M727.500 449.500h9v9h-9zM731.500 450v4.500H736" />
      </g>
      <g fill="#c4c7cc" fontFamily="Liberation Sans" fontSize="17" textAnchor="middle">
        <text x="739" y="403">Y</text>
        <text x="789" y="453">X</text>
      </g>
      <path d="M755.500 498.500h6v6h-6z" stroke="#fff" />
      <path d="M759 502v15l3.500-3 2.500 5.500 2.500-1.200-2.500-5h4.500z" fill="#fff" stroke="#222" strokeWidth=".6" />
    </g>
  </Drawing>
);

export default function App() {
  return (
    <Page>
      <GlobalStyle />
      <Header>
        <AppButton aria-label="Application menu">
          <svg width="24" height="26" viewBox="0 0 24 26" aria-hidden="true">
            <path d="M10 1h5l8 19-5 3-3-4H9l-3 4-5-3z" fill="#c5161d" />
            <path d="M10 1h3L9 18l-3 5-5-3z" fill="#dd2a33" />
            <path d="M12 11l2 5h-4z" fill="#8a1015" />
          </svg>
          <Caret s={6} c="#333" />
        </AppButton>
        <TitleBar>
          <Title>
            <span>Autodesk AutoCAD 2015</span>
            <span>Drawing2.dwg</span>
          </Title>
          <InfoCenter>
            <InfoButton $w={13} aria-label="Collapse search">
              <I w={4} h={7}><path d="M0 0l4 3.500L0 7z" fill="#fff" /></I>
            </InfoButton>
            <SearchInput placeholder="Type a keyword or phrase" aria-label="Search" />
            <InfoButton $w={24} aria-label="Find">
              <I>
                <path d="M3 2h3l1 3h2l1-3h3l2 9v3h-5V9H6v5H1v-3z" fill="#e8e8e8" stroke="#222" />
                <path d="M4.500 5v6M11.500 5v6" stroke="#666" />
              </I>
            </InfoButton>
            <SignIn>
              <I>
                <circle cx="8" cy="5" r="4" fill="#eee" stroke="#222" />
                <path d="M1 14.500c1-3 4-3 5-4h4c1 1 4 1 5 4z" fill="#eee" stroke="#222" />
              </I>
              Sign In
            </SignIn>
            <InfoButton $w={8} aria-label="Account options"><Caret s={5} /></InfoButton>
            <InfoButton $w={28} aria-label="Exchange apps">
              <I>
                <path d="M8 8l3-5h4l-4 5 4 6h-4z" fill="#2d3aa0" stroke="#dfe3f5" strokeWidth=".6" />
                <path d="M1 3h4l3 5-3 6H1l4-6z" fill="#d5daee" stroke="#3a4680" strokeWidth=".8" />
              </I>
            </InfoButton>
            <InfoButton $w={18} aria-label="Stay connected">
              <I>
                <path d="M8 3L3 12h10z" stroke="#39436c" strokeWidth="3" />
                <path d="M8 3L3 12h10z" stroke="#cfd4e6" strokeWidth="1.500" />
                <circle cx="8" cy="3.500" r="2.200" fill="#dfe3f2" stroke="#39436c" strokeWidth=".7" />
                <circle cx="3" cy="12" r="2.200" fill="#dfe3f2" stroke="#39436c" strokeWidth=".7" />
                <circle cx="13" cy="12" r="2.200" fill="#dfe3f2" stroke="#39436c" strokeWidth=".7" />
              </I>
            </InfoButton>
            <InfoButton $w={10} aria-label="Connect options"><Caret s={5} /></InfoButton>
            <HelpButton $w={28} aria-label="Help">
              <svg width="16" height="16" viewBox="0 0 16 16" aria-hidden="true">
                <circle cx="8" cy="8" r="7" fill="#f4f6fc" stroke="#223" />
                <text x="8" y="12" textAnchor="middle" fontSize="11" fontWeight="700" fill="#2b3fb0">?</text>
              </svg>
            </HelpButton>
            <InfoButton $w={8} aria-label="Help options"><Caret s={5} /></InfoButton>
          </InfoCenter>
          <WindowButtons>
            <WindowButton aria-label="Minimize"><I w={10} h={10}><path d="M0 5.500h10" stroke="#222" /></I></WindowButton>
            <WindowButton aria-label="Restore"><I w={10} h={10}><path d="M.5 2.500h7v7h-7zM2.500 2.500v-2h7v7h-2" stroke="#222" /></I></WindowButton>
            <WindowButton aria-label="Close"><I w={10} h={10}><path d="M.5.5l9 9M9.500.5l-9 9" stroke="#222" /></I></WindowButton>
          </WindowButtons>
        </TitleBar>
        <MenuBar>
          {menus.map((m) => (
            <MenuItem key={m}>{m}</MenuItem>
          ))}
          <MdiButtons>
            <MdiButton aria-label="Minimize drawing"><I w={10} h={10}><path d="M1 7.500h8" stroke="#222" strokeWidth="2" /></I></MdiButton>
            <MdiButton aria-label="Restore drawing"><I w={11} h={10}><path d="M.5 4h6v5h-6zM3.500 3.500V1h6.500v5.500H7" stroke="#222" strokeWidth="1.400" /></I></MdiButton>
            <MdiButton aria-label="Close drawing"><I w={9} h={9}><path d="M1 1l7 7M8 1L1 8" stroke="#222" strokeWidth="2" /></I></MdiButton>
          </MdiButtons>
        </MenuBar>
        <RibbonTabs>
          {tabs.map((t, i) => (
            <RibbonTab key={t} $active={i === 0}>{t}</RibbonTab>
          ))}
          <RibbonToggle aria-label="Minimize ribbon">
            <I w={13} h={9}>
              <rect x=".5" y="1" width="12" height="7" rx="1.500" fill="#eee" />
              <path d="M3.500 6.500h6l-3-3z" fill="#444" />
            </I>
            <Caret s={5} />
          </RibbonToggle>
        </RibbonTabs>
      </Header>

      <Ribbon>
        <Panel $w={210} aria-label="Draw">
          <PanelBody>
            <Big w={38} icon={<LineIcon />} label={["Line"]} />
            <Big w={44} icon={<PolylineIcon />} label={["Polyline"]} />
            <Big w={50} icon={<CircleIcon />} label={["Circle"]} caret />
            <Big w={36} icon={<ArcIcon />} label={["Arc"]} caret />
            <Column>
              <SplitRow icon={<RectIcon />} name="Rectangle" />
              <SplitRow icon={<EllipseIcon />} name="Ellipse" />
              <SplitRow icon={<HatchIcon />} name="Hatch" />
            </Column>
          </PanelBody>
          <Footer name="Draw" />
        </Panel>

        <Panel $w={165} aria-label="Modify">
          <PanelBody>
            <Column $w={68} $pad={6}>
              <TextTool><MoveIcon />Move</TextTool>
              <TextTool><CopyIcon />Copy</TextTool>
              <TextTool><StretchIcon />Stretch</TextTool>
            </Column>
            <Column $w={28}>
              <Row icon={<RotateIcon />} name="Rotate" />
              <Row icon={<MirrorIcon />} name="Mirror" />
              <Row icon={<ScaleIcon />} name="Scale" />
            </Column>
            <Column $w={38}>
              <SplitRow icon={<TrimIcon />} name="Trim" />
              <SplitRow icon={<FilletIcon />} name="Fillet" />
              <SplitRow icon={<ArrayIcon />} name="Array" />
            </Column>
            <Column>
              <Row icon={<EraseIcon />} name="Erase" />
              <Row icon={<BoxIcon />} name="Explode" />
              <Row icon={<OffsetIcon />} name="Offset" />
            </Column>
          </PanelBody>
          <Footer name="Modify" />
        </Panel>

        <Panel $w={80} aria-label="Annotation">
          <PanelBody>
            <Big w={42} icon={<LetterWrap>A</LetterWrap>} label={["Text"]} caret />
            <Column>
              <SplitRow icon={<DimIcon />} name="Dimension" />
              <SplitRow icon={<LeaderIcon />} name="Leader" />
              <Row icon={<TableIcon />} name="Table" />
            </Column>
          </PanelBody>
          <Footer name="Annotation" />
        </Panel>

        <Panel $w={256} aria-label="Layers">
          <PanelBody>
            <Big w={58} icon={<LayerPropsIcon />} label={["Layer", "Properties"]} />
            <Column>
              <ComboBox w={196} name="Layer" value="0" indent={0}>
                <BulbIcon />
                <SunIcon />
                <UnlockIcon />
                <Swatch $s={13} />
              </ComboBox>
              {[0, 5].map((start) => (
                <ToolRow key={start}>
                  {layerTools.slice(start, start + 5).map((n, i) => (
                    <Tool key={n} aria-label={`Layer ${n}`} $w={22}>
                      <LayerTool kind={start + i} />
                    </Tool>
                  ))}
                </ToolRow>
              ))}
            </Column>
          </PanelBody>
          <Footer name="Layers" />
        </Panel>

        <Panel $w={75} aria-label="Block">
          <PanelBody>
            <Big w={40} icon={<InsertIcon />} label={["Insert"]} />
            <Column>
              <Row icon={<BlockIcon kind={0} />} name="Create block" w={20} />
              <Row icon={<BlockIcon kind={1} />} name="Edit block" w={20} />
              <SplitRow icon={<BlockIcon kind={2} />} name="Edit attributes" w={20} cw={12} />
            </Column>
          </PanelBody>
          <Footer name="Block" />
        </Panel>

        <Panel $w={209} aria-label="Properties">
          <PanelBody>
            <Big w={60} icon={<MatchIcon />} label={["Match", "Properties"]} />
            <Column $w={18}>
              <Row icon={<WheelIcon />} name="Object color" w={16} />
              <Row icon={<WeightIcon />} name="Lineweight" w={16} />
              <Row icon={<LinetypeIcon />} name="Linetype" w={16} />
            </Column>
            <Column>
              <ComboBox w={128} name="Color" value="ByLayer" indent={4}>
                <span />
                <Swatch $s={16} />
              </ComboBox>
              <ComboBox w={128} name="Lineweight value" value="ByLayer" indent={0}>
                <LineSample />
              </ComboBox>
              <ComboBox w={128} name="Linetype value" value="ByLayer" indent={0}>
                <LineSample />
              </ComboBox>
            </Column>
          </PanelBody>
          <Footer name="Properties" launcher />
        </Panel>

        <Panel $w={65} aria-label="Groups">
          <PanelBody>
            <Big w={40} icon={<GroupIcon />} label={["Group"]} />
            <Column>
              <Row icon={<GroupTool kind={0} />} name="Ungroup" w={20} />
              <Row icon={<GroupTool kind={1} />} name="Group edit" w={20} />
              <Row icon={<GroupTool kind={2} />} name="Group selection" w={20} on />
            </Column>
          </PanelBody>
          <Footer name="Groups" />
        </Panel>

        <Panel $w={91} aria-label="Utilities">
          <PanelBody>
            <Big w={66} icon={<MeasureIcon />} label={["Measure"]} caret />
            <Column>
              <Row icon={<QuickSelectIcon />} name="Quick select" w={20} />
              <Row icon={<PointIcon />} name="ID point" w={20} />
              <Row icon={<CalcIcon />} name="Calculator" w={20} />
            </Column>
          </PanelBody>
          <Footer name="Utilities" />
        </Panel>

        <Panel $w={74} aria-label="Clipboard">
          <PanelBody>
            <Big w={50} icon={<PasteIcon />} label={["Paste"]} caret />
            <Column>
              <Row icon={<CutIcon />} name="Cut" w={20} />
              <Row icon={<CopyClipIcon />} name="Copy to clipboard" w={20} />
            </Column>
          </PanelBody>
        </Panel>

        <Panel $w={44} aria-label="View">
          <PanelBody>
            <Big w={44} icon={<BaseIcon />} label={["Base"]} caret />
          </PanelBody>
          <Footer name="View" launcher />
        </Panel>
      </Ribbon>

      <QuickAccess>
        <Tool $w={23} aria-label="New"><NewIcon /></Tool>
        <Tool $w={23} aria-label="Open"><OpenIcon /></Tool>
        <Tool $w={22} aria-label="Save"><SaveIcon /></Tool>
        <Tool $w={23} aria-label="Save as"><SaveIcon pen /></Tool>
        <Tool $w={22} aria-label="Plot"><PrintIcon /></Tool>
        <Tool $w={23} aria-label="Undo"><UndoIcon /></Tool>
        <CaretTool $w={11} aria-label="Undo options"><Caret s={5} /></CaretTool>
        <Tool $w={23} aria-label="Redo"><UndoIcon flip /></Tool>
        <CaretTool $w={11} aria-label="Redo options"><Caret s={5} /></CaretTool>
        <CaretTool $w={16} aria-label="Customize toolbar">
          <I w={8} h={8}><path d="M0 1h8" stroke="#eee" strokeWidth="1.500" /><path d="M0 3h8L4 7z" fill="#eee" /></I>
        </CaretTool>
      </QuickAccess>

      <FileTabs>
        <FileTab>
          Drawing2*
          <Tool $w={10} aria-label="Close tab"><I w={8} h={8}><path d="M1 1l6 6M7 1L1 7" stroke="#444" strokeWidth="1.600" /></I></Tool>
        </FileTab>
        <NewTab aria-label="New tab"><I w={7} h={7}><path d="M3.500 0v7M0 3.500h7" stroke="#ddd" strokeWidth="1.600" /></I></NewTab>
      </FileTabs>

      <Canvas>
        <ModelSpace />
        <ViewLabel>[−][Top][2D Wireframe]</ViewLabel>
        <ViewCube>
          <svg width="84" height="86" viewBox="0 0 84 86" role="img" aria-label="View cube">
            <circle cx="41.500" cy="43.500" r="34" fill="none" stroke="#484c59" strokeWidth="8" />
            <rect x="26" y="28" width="31" height="31" fill="#b9bac0" stroke="#d0d1d6" />
            <g textAnchor="middle" fontFamily="Liberation Sans" fontWeight="700">
              <text x="41.500" y="46.500" fontSize="8" fill="#3d4048">TOP</text>
              <g fontSize="13" fill="#d3d5dc">
                <text x="41.500" y="14">N</text>
                <text x="41.500" y="84">S</text>
                <text x="6.500" y="49">W</text>
                <text x="77" y="49">E</text>
              </g>
            </g>
          </svg>
          <Wcs>WCS</Wcs>
        </ViewCube>
        <Tooltip role="tooltip">Select objects:</Tooltip>
        <CommandDock>
          <CommandPanel>
            <History>
              <HistoryLine $tone="#a5a6a9" $bg="#414349">Select cutting edges ...</HistoryLine>
              <HistoryLine $tone="#c5c6c8" $bg="#494b50">Select objects or &lt;select all&gt;: 1 found</HistoryLine>
              <HistoryLine $tone="#ececec" $bg="#55565a">Select objects: 1 found, 2 total</HistoryLine>
            </History>
            <CommandBar>
              <CommandGrip>
                <I w={5} h={17}><path d="M1 0v17M4 0v17" stroke="#bbb" strokeDasharray="1 1" /></I>
                <GripButton aria-label="Close command line"><I w={10} h={10}><path d="M1 1l8 8M9 1L1 9" stroke="#eee" strokeWidth="2" /></I></GripButton>
                <GripButton aria-label="Customize command line">
                  <I w={13} h={13}>
                    <path d="M5 5l6.500 6.500" stroke="#eee" strokeWidth="2.600" />
                    <path d="M1 3.500A3.300 3.300 0 0 0 6.500 6 3.300 3.300 0 0 0 4 1v2.500L3 4.500z" fill="#eee" />
                  </I>
                </GripButton>
              </CommandGrip>
              <CommandEntry>
                <I w={14} h={12}><path d="M0 11L5 1" stroke="#667bd0" /><path d="M3 6.500h11" stroke="#8a98dc" strokeDasharray="3 1" /></I>
                <Caret s={5} c="#999" />
                <CommandName>TRIM</CommandName>
                <span>Select objects:</span>
                <CommandInput aria-label="Command" />
                <I w={6} h={4}><path d="M0 4h6L3 0z" fill="#222" /></I>
              </CommandEntry>
            </CommandBar>
          </CommandPanel>
        </CommandDock>
      </Canvas>

      <StatusBar>
        <LayoutTabs>
          <LayoutTab $w={59} $active>Model</LayoutTab>
          <LayoutTab $w={57}>Layout1</LayoutTab>
          <LayoutTab $w={64}>Layout2</LayoutTab>
          <LayoutTab $w={26} aria-label="New layout"><I w={6} h={6}><path d="M3 0v6M0 3h6" stroke="#ddd" strokeWidth="1.500" /></I></LayoutTab>
        </LayoutTabs>
        <StatusCells>
          <Cell $w={47}><CellButton>MODEL</CellButton></Cell>
          <Cell $w={61}>
            <CellButton aria-label="Grid"><GridIcon on /></CellButton>
            <CellButton aria-label="Snap mode"><GridIcon /></CellButton>
            <CellButton aria-label="Snap options"><Caret /></CellButton>
          </Cell>
          <Cell $w={98}>
            <CellButton aria-label="Ortho mode"><OrthoIcon /></CellButton>
            <CellButton aria-label="Polar tracking"><PolarIcon /></CellButton>
            <CellButton aria-label="Polar options"><Caret /></CellButton>
            <CellButton aria-label="Isometric drafting"><IsoIcon /></CellButton>
            <CellButton aria-label="Isometric options"><Caret /></CellButton>
          </Cell>
          <Cell $w={62}>
            <CellButton aria-label="Object snap tracking"><TrackIcon /></CellButton>
            <CellButton aria-label="Object snap"><SnapIcon /></CellButton>
            <CellButton aria-label="Snap settings"><Caret /></CellButton>
          </Cell>
          <Cell $w={101}>
            <CellButton aria-label="Annotation visibility"><ScaleMan c={blue} kind={0} /></CellButton>
            <CellButton aria-label="Auto scale"><ScaleMan c={light} kind={1} /></CellButton>
            <CellButton aria-label="Annotation scale"><ScaleMan c={light} kind={2} /></CellButton>
            <CellButton>1:1</CellButton>
            <CellButton aria-label="Scale options"><Caret /></CellButton>
          </Cell>
          <Cell $w={38}>
            <CellButton aria-label="Workspace"><GearIcon /></CellButton>
            <CellButton aria-label="Workspace options"><Caret /></CellButton>
          </Cell>
          <Cell $w={25}><CellButton aria-label="Annotation monitor"><PlusIcon /></CellButton></Cell>
          <Cell $w={25}><CellButton aria-label="Hardware acceleration"><PerfIcon /></CellButton></Cell>
          <Cell $w={31}><CellButton aria-label="Isolate objects"><IsolateIcon /></CellButton></Cell>
          <Cell $w={47}>
            <CellButton aria-label="Clean screen"><CleanIcon /></CellButton>
            <CellButton aria-label="Customization"><BurgerIcon /></CellButton>
          </Cell>
        </StatusCells>
      </StatusBar>
    </Page>
  );
}
